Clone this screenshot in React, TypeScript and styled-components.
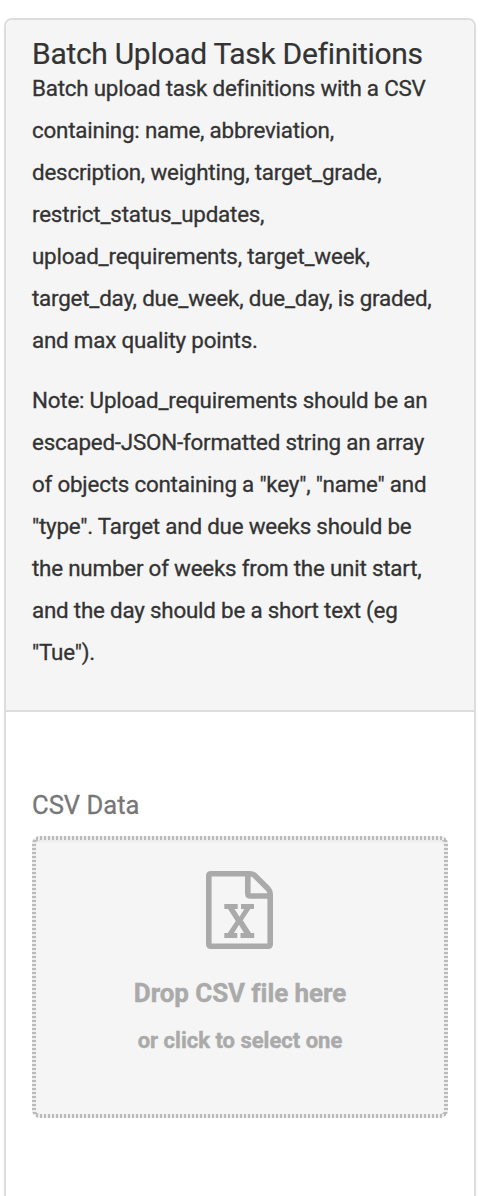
import React from "react";
import styled, { createGlobalStyle } from "styled-components";

const GlobalStyle = createGlobalStyle`
  * { box-sizing: border-box; }
  body {
    margin: 0;
    background: #fff;
    font-family: Roboto, sans-serif;
    font-variant-ligatures: none;
    color: #333;
  }
`;

const Page = styled.main`
  height: 1196px;
  overflow: hidden;
  padding: 18px 16px 0 4px;
`;

const Panel = styled.section`
  height: 1220px;
  border: 2px solid #ddd;
  border-radius: 8px;
  overflow: hidden;
  box-shadow: 0 2px 2px rgba(0, 0, 0, 0.05);
`;

const PanelHeading = styled.header`
  height: 692px;
  padding: 17px 26px 0;
  background: #f5f5f5;
  border-bottom: 2px solid #ddd;
`;

const Title = styled.h4`
  margin: 0;
  font-size: 30px;
  line-height: 33px;
  font-weight: 400;
  letter-spacing: -0.3px;
  white-space: nowrap;
  -webkit-text-stroke: 0.2px currentColor;
`;

const Description = styled.div`
  margin-top: -3px;
`;

const Paragraph = styled.p`
  margin: 0 0 18px;
  font-size: 22.4px;
  line-height: 42px;
  letter-spacing: -0.22px;
  white-space: nowrap;
  -webkit-text-stroke: 0.3px currentColor;
`;

const PanelBody = styled.div`
  padding: 78px 26px 0;
`;

const Label = styled.h5`
  margin: 0 0 16px;
  font-size: 25.6px;
  line-height: 30px;
  font-weight: 400;
  color: #777;
  -webkit-text-stroke: 0.3px currentColor;
`;

const DropZone = styled.div`
  display: flex;
  flex-direction: column;
  align-items: center;
  height: 282px;
  padding-top: 31px;
  border: 4px solid transparent;
  border-radius: 8px;
  background:
    linear-gradient(#f5f5f5, #f5f5f5) padding-box,
    repeating-linear-gradient(90deg, #bbb 0 2px, #eee 2px 4px) top / 100% 4px no-repeat border-box,
    repeating-linear-gradient(90deg, #bbb 0 2px, #eee 2px 4px) bottom / 100% 4px no-repeat border-box,
    repeating-linear-gradient(#bbb 0 2px, #eee 2px 4px) border-box;
  box-shadow: inset 0 2px 2px rgba(0, 0, 0, 0.04);
  color: #aaa;
  font-weight: 700;
`;

const DropTitle = styled.div`
  margin-top: 28px;
  font-size: 26px;
  line-height: 32px;
  letter-spacing: -0.08px;
  -webkit-text-stroke: 0.4px currentColor;
`;

const DropHint = styled.div`
  margin-top: 18px;
  font-size: 22px;
  line-height: 28px;
  -webkit-text-stroke: 0.4px currentColor;
`;

const SpreadsheetIcon = () => (
  <svg width="68" height="78" viewBox="0 0 68 78" fill="none" stroke="currentColor">
    <path
      d="M5 2.8H44Q47 2.8 49 4.8L62 17.8Q64.2 20 64.2 23V73Q64.2 75.2 62 75.2H5Q2.8 75.2 2.8 73V5Q2.8 2.8 5 2.8ZM41.8 3V22.2Q41.8 25 44.6 25H64"
      strokeWidth="5.6"
    />
    <path
      fill="currentColor"
      stroke="none"
      d="M18.3 33H31.7V38H28.5L33.5 45.8L38.3 38H35V33H48V38H44.3L36.8 49.3L45 62H48.2V67H34.5V62H38L33 53.7L28 62H31.3V67H18.3V62H21.8L29.8 50L22 38H18.3Z"
    />
  </svg>
);

const intro = [
  "Batch upload task definitions with a CSV",
  "containing: name, abbreviation,",
  "description, weighting, target_grade,",
  "restrict_status_updates,",
  "upload_requirements, target_week,",
  "target_day, due_week, due_day, is graded,",
  "and max quality points.",
];

const note = [
  "Note: Upload_requirements should be an",
  "escaped-JSON-formatted string an array",
  'of objects containing a "key", "name" and',
  '"type". Target and due weeks should be',
  "the number of weeks from the unit start,",
  "and the day should be a short text (eg",
  '"Tue").',
];

const Lines = ({ lines }: { lines: string[] }) => (
  <Paragraph>
    {lines.map((line) => (
      <React.Fragment key={line}>
        {line}
        <br />
      </React.Fragment>
    ))}
  </Paragraph>
);

export default function App() {
  return (
    <Page>
      <GlobalStyle />
      <Panel>
        <PanelHeading>
          <Title>Batch Upload Task Definitions</Title>
          <Description>
            <Lines lines={intro} />
            <Lines lines={note} />
          </Description>
        </PanelHeading>
        <PanelBody>
          <Label>CSV Data</Label>
          <DropZone>
            <SpreadsheetIcon />
            <DropTitle>Drop CSV file here</DropTitle>
            <DropHint>or click to select one</DropHint>
          </DropZone>
        </PanelBody>
      </Panel>
    </Page>
  );
}
